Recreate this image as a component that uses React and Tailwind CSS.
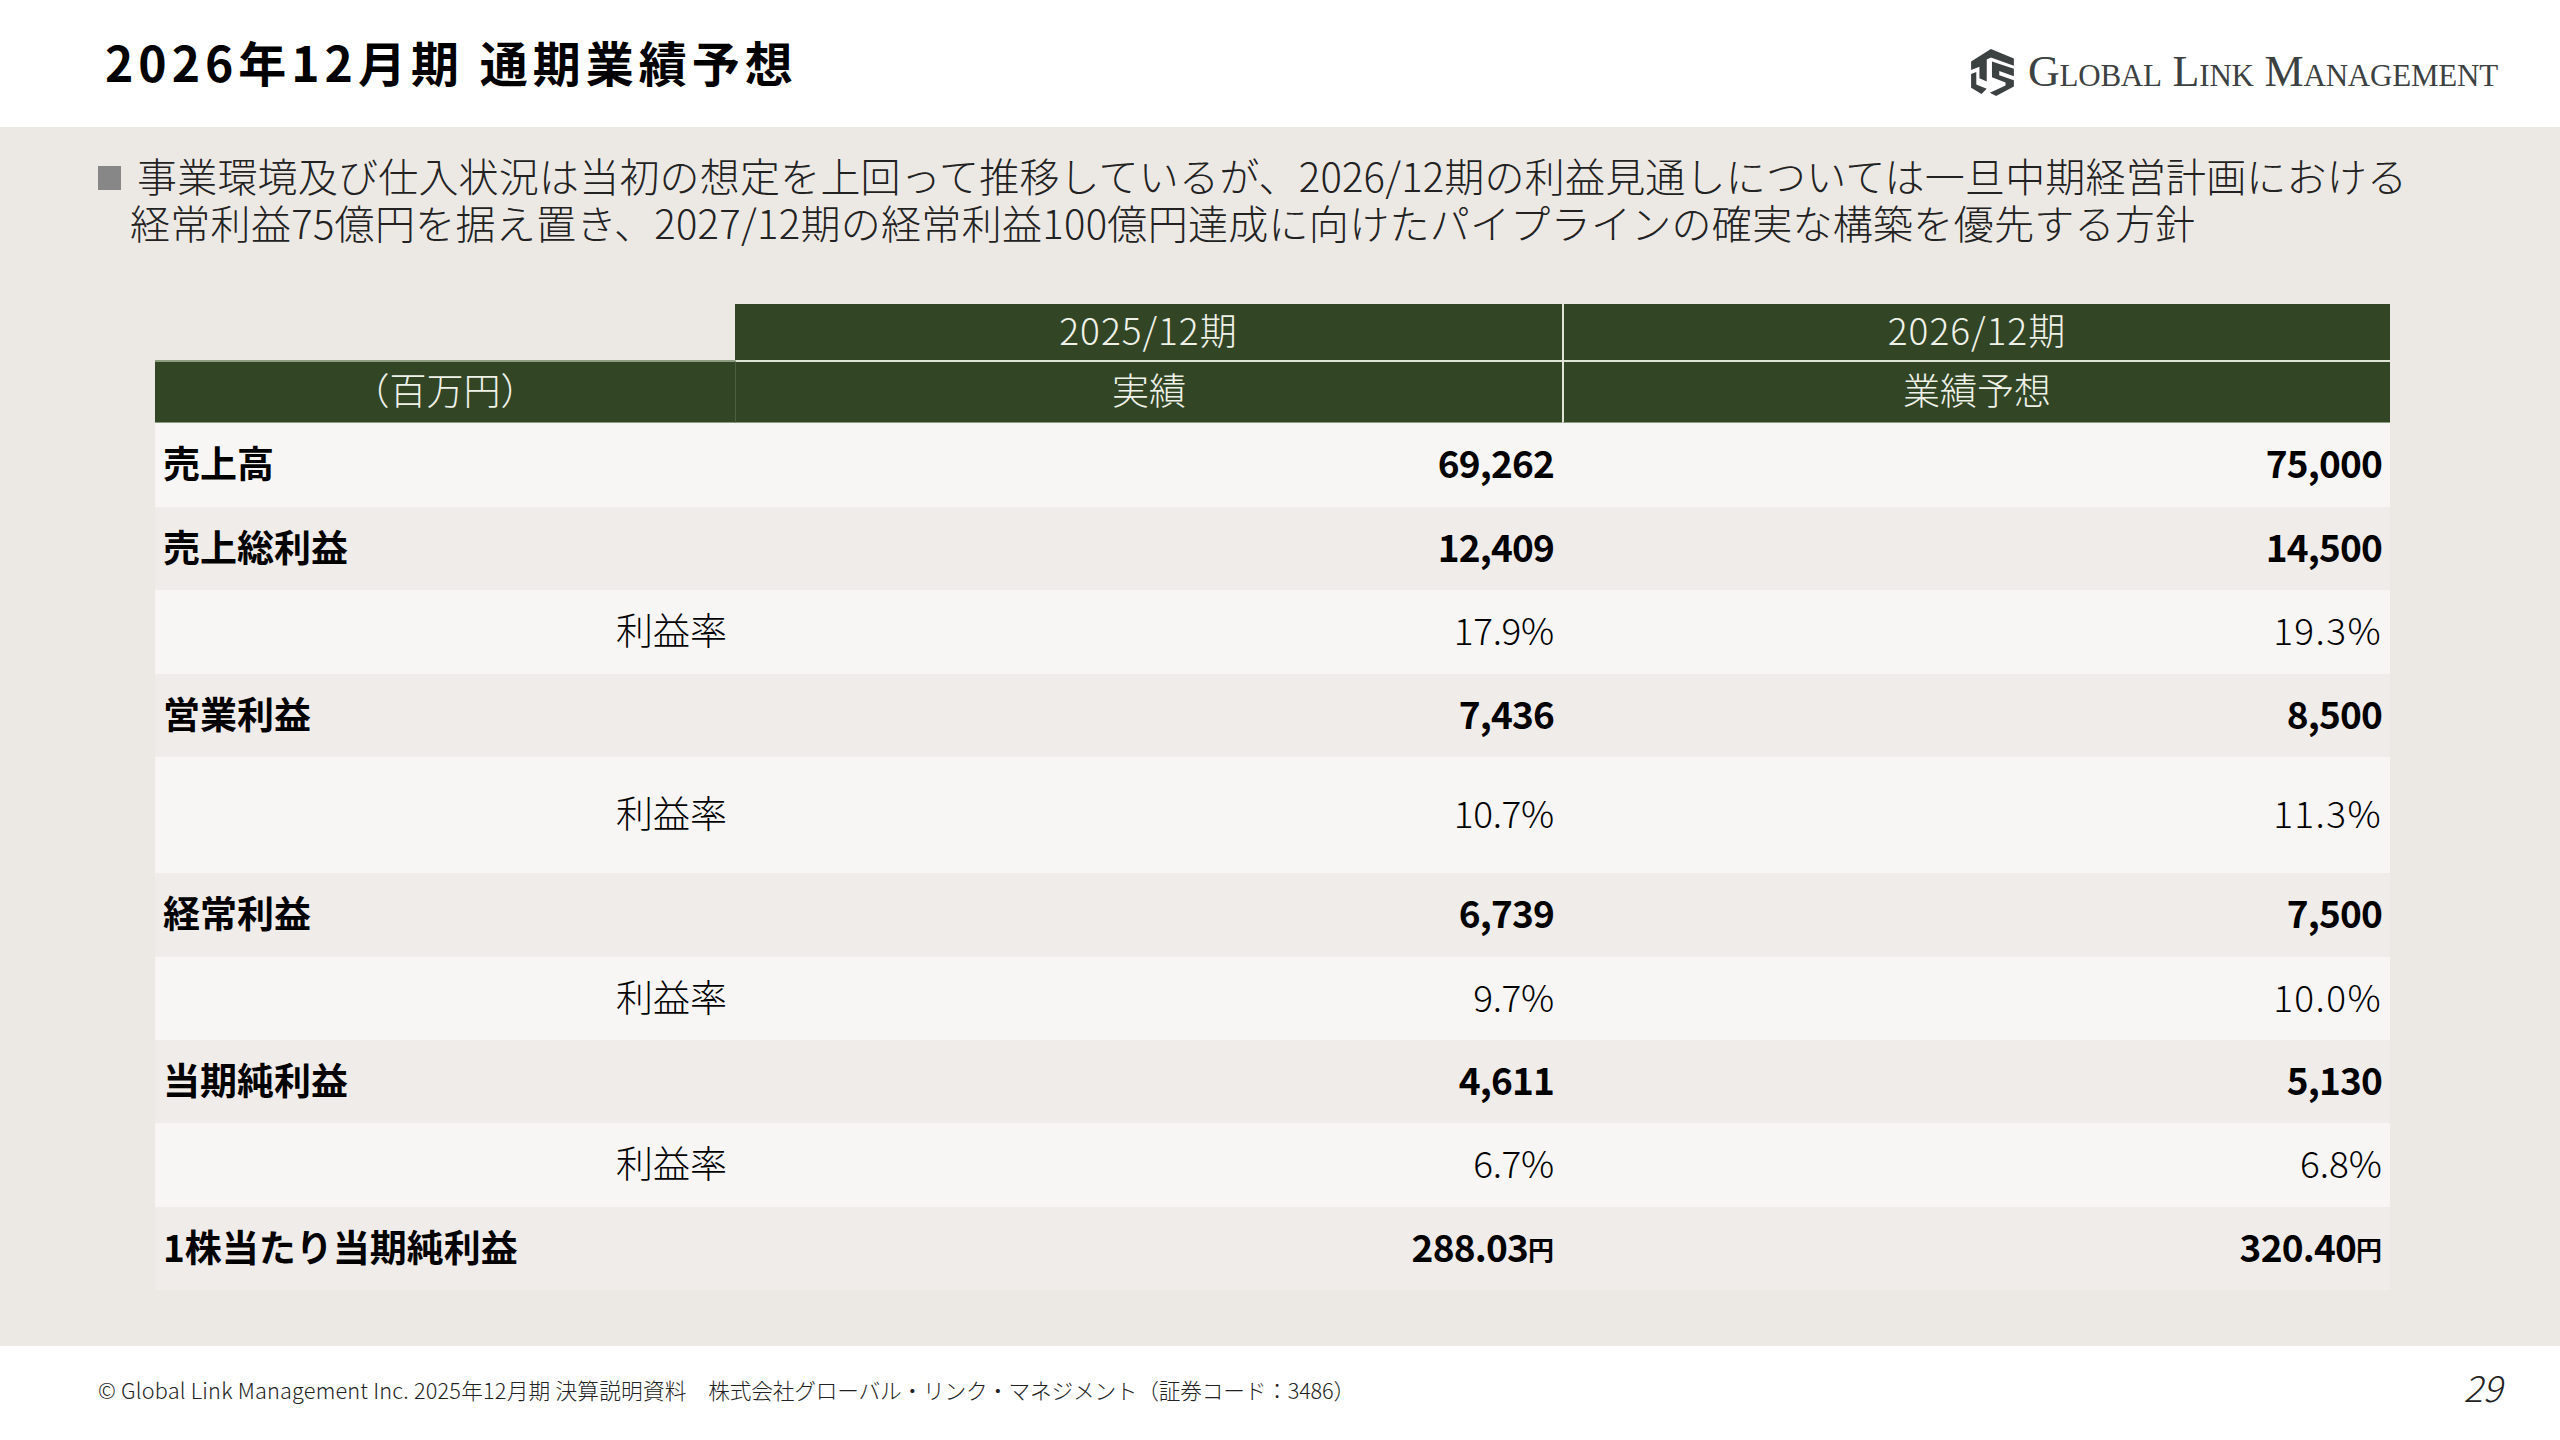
const rows = [
  { label: "売上高", a: "69,262", b: "75,000", h: "h-[84px]", bg: "bg-[#f7f6f4]", bold: true },
  { label: "売上総利益", a: "12,409", b: "14,500", h: "h-[83px]", bg: "bg-[#f0ecea]", bold: true },
  { label: "利益率", a: "17.9%", b: "19.3%", h: "h-[84px]", bg: "bg-[#f7f6f4]", wide: true },
  { label: "営業利益", a: "7,436", b: "8,500", h: "h-[83px]", bg: "bg-[#f0ecea]", bold: true },
  { label: "利益率", a: "10.7%", b: "11.3%", h: "h-[116px]", bg: "bg-[#f7f6f4]", wide: true },
  { label: "経常利益", a: "6,739", b: "7,500", h: "h-[84px]", bg: "bg-[#f0ecea]", bold: true },
  { label: "利益率", a: "9.7%", b: "10.0%", h: "h-[83px]", bg: "bg-[#f7f6f4]", wide: true },
  { label: "当期純利益", a: "4,611", b: "5,130", h: "h-[83px]", bg: "bg-[#f0ecea]", bold: true },
  { label: "利益率", a: "6.7%", b: "6.8%", h: "h-[84px]", bg: "bg-[#f7f6f4]" },
  { label: "1株当たり当期純利益", a: "288.03", b: "320.40", h: "h-[83px]", bg: "bg-[#f0ecea]", bold: true, yen: true },
];

function Logo() {
  return (
    <div className="flex items-center gap-[13px]">
      <svg width="44" height="48" viewBox="0 0 42 46" fill="#3c4142">
        <path d="M0 13 L19 1 L41 10 L41 17 L19 9 L15 11 L15 32 L8 29 L8 18 L0 21 Z" />
        <path d="M0 25 L5 23 L5 35 L15 39 L10 44 L0 38 Z" />
        <path d="M20 13 L41 20 L41 27 L27 22 L27 26 L41 31 L41 37 L24 46 L18 43 L33 36 L33 33 L20 28 Z" />
      </svg>
      <div className="font-['Liberation_Serif',serif] text-[44px] tracking-[-0.2px] leading-none text-[#3c4142] [font-variant:small-caps] whitespace-nowrap">
        Global Link Management
      </div>
    </div>
  );
}

export default function App() {
  return (
    <div className="w-[2560px] h-[1440px] bg-white flex flex-col font-['Noto_Sans_CJK_JP',sans-serif] text-black">
      <div className="h-[127px] flex items-center justify-between pl-[105px] pr-[62px]">
        <h1 className="text-[48px] font-bold leading-none tracking-[5px] pb-[5px]">2026年12月期 通期業績予想</h1>
        <div className="pt-[17px]"><Logo /></div>
      </div>

      <div className="h-[1219px] bg-[#ece9e5] pt-[25px]">
        <div className="flex pl-[98px] text-[40px] tracking-[0.2px] font-light leading-[47px] text-[#222]">
          <span className="w-[23px] h-[24px] bg-[#878787] mt-[14px] mr-[16px] shrink-0" />
          <p className="whitespace-nowrap">
            事業環境及び仕入状況は当初の想定を上回って推移しているが、2026/12期の利益見通しについては一旦中期経営計画における
            <br />
            <span className="-ml-[7px] tracking-[0.3px]">経常利益75億円を据え置き、2027/12期の経常利益100億円達成に向けたパイプラインの確実な構築を優先する方針</span>
          </p>
        </div>

        <div className="ml-[155px] mt-[58px] w-[2235px] grid grid-cols-[580px_827px_828px] text-[37px]">
          <div className="h-[56px]" />
          <div className="h-[56px] pb-[4px] bg-[#324626] text-[#f0f2ea] font-light tracking-[1px] flex items-center justify-center">2025/12期</div>
          <div className="h-[56px] pb-[4px] bg-[#324626] text-[#f0f2ea] font-light tracking-[1px] flex items-center justify-center border-l-2 border-[#dfe4d6]">2026/12期</div>
          <div className="h-[63px] pb-[4px] bg-[#324626] text-[#f0f2ea] font-light flex items-center justify-center border-t-2 border-b border-[#8d9c80]">（百万円）</div>
          <div className="h-[63px] pb-[4px] bg-[#324626] text-[#f0f2ea] font-light flex items-center justify-center border-t-2 border-t-[#dfe4d6] border-b border-b-[#8d9c80] border-l border-l-[#4d5f42]">実績</div>
          <div className="h-[63px] pb-[4px] bg-[#324626] text-[#f0f2ea] font-light flex items-center justify-center border-t-2 border-t-[#dfe4d6] border-b border-b-[#8d9c80] border-l-2 border-l-[#dfe4d6]">業績予想</div>

          {rows.map((r, i) => (
            <div key={i} className={`col-span-3 grid grid-cols-[580px_827px_828px] items-center pb-[4px] ${r.h} ${r.bg} ${r.bold ? "font-bold" : "font-light"}`}>
              <div className={r.bold ? "pl-[8px]" : "pr-[8px] text-right"}>{r.label}</div>
              <div className={`pr-[8px] text-right ${r.bold ? "tracking-[-0.8px]" : "tracking-[-0.3px]"}`}>
                {r.a}{r.yen && <span className="text-[26px] tracking-normal relative -top-[2px]">円</span>}
              </div>
              <div className={`pr-[8px] text-right ${r.bold ? "tracking-[-0.8px]" : ""} ${r.wide ? "tracking-[1.4px]" : ""}`}>
                {r.b}{r.yen && <span className="text-[26px] tracking-normal relative -top-[2px]">円</span>}
              </div>
            </div>
          ))}
        </div>
      </div>

      <div className="flex-1 flex items-center justify-between pl-[98px] pr-[58px] pb-[5px]">
        <div className="text-[21.7px] font-light text-[#222] whitespace-nowrap">
          <span className="tracking-[0.2px]">© Global Link Management Inc. 2025年12月期 決算説明資料</span>
          <span className="tracking-[-0.2px]">　株式会社グローバル・リンク・マネジメント（証券コード：3486）</span>
        </div>
        <div className="text-[36px] italic font-light text-[#222] pb-[10px]">29</div>
      </div>
    </div>
  );
}
